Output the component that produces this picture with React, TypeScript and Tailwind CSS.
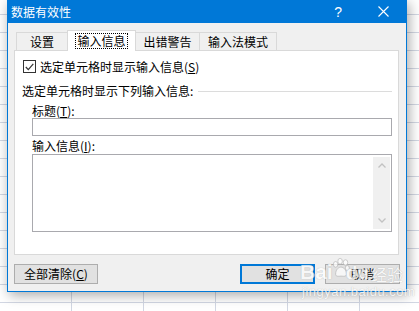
import React from 'react';

const TabItem: React.FC<{ label: string; className: string; active?: boolean }> = ({ label, className, active }) => {
  if (active) {
    return (
      <div className={`relative z-10 -mb-px -ml-px flex h-[21px] items-start justify-center border border-b-0 border-[#d9d9d9] bg-white pt-[2px] ${className}`}>
        <span className="border border-dotted border-black px-[1px] leading-[14px]">{label}</span>
      </div>
    );
  }
  return (
    <div className={`-ml-px flex h-[18px] items-center justify-center border border-b-0 border-[#d9d9d9] bg-[#f0f0f0] leading-[14px] ${className}`}>
      {label}
    </div>
  );
};

// faint baidu jingyan watermark over the lower right corner
const Watermark: React.FC = () => (
  <div className="pointer-events-none absolute left-[300px] top-[257px] flex flex-col text-white opacity-75 [text-shadow:0_0_1px_#9a9a9a]">
    <div className="flex items-end">
      <span className="font-['Liberation_Sans',sans-serif] text-[21px] font-bold leading-[26px]">Bai</span>
      <svg width="18" height="22" viewBox="0 0 20 22" className="-ml-[1px] mb-[6px]">
        <g fill="#ffffff" stroke="#a8a8a8" strokeWidth="0.8">
          <ellipse cx="4" cy="7" rx="2.5" ry="3.2" />
          <ellipse cx="9" cy="3.5" rx="2.5" ry="3.2" />
          <ellipse cx="15" cy="5" rx="2.5" ry="3.2" />
          <ellipse cx="17" cy="11" rx="2.3" ry="2.8" />
          <path d="M4 18 C4 12 8 10 10 10 C13 10 16 13 16 18 C16 21 12 20 10 20 C8 20 4 21 4 18 Z" />
        </g>
      </svg>
      <span className="-ml-[4px] font-['Liberation_Sans',sans-serif] text-[19px] font-bold leading-[24px]">du</span>
      <span className="ml-[2px] text-[16px] leading-[22px]">经验</span>
    </div>
    <span className="ml-[2px] font-['Liberation_Sans',sans-serif] text-[13px] leading-[14px] tracking-[0.5px]">jingyan.baidu.com</span>
  </div>
);

export default function App() {
  return (
    <div className="relative h-[311px] w-[419px] overflow-hidden bg-white bg-[linear-gradient(to_right,#d2d7e3_1px,transparent_1px),linear-gradient(to_bottom,#d2d7e3_1px,transparent_1px)] bg-[size:72px_18px] bg-[position:71px_14px] font-['Noto_Sans_CJK_SC',sans-serif] text-[12px] text-black">
      <div className="ml-[7px] flex h-[292px] w-[400px] flex-col border-x border-b border-[#0078d7] bg-[#f0f0f0] shadow-[2px_3px_12px_rgba(0,0,0,0.35)]">
        {/* title bar */}
        <div className="flex h-[23px] shrink-0 items-center bg-[#0078d7] pl-[3px] text-white">
          <span className="leading-[14px]">数据有效性</span>
          <span className="ml-auto font-['Liberation_Sans',sans-serif] text-[14px] leading-[14px]">?</span>
          <svg width="11" height="11" viewBox="0 0 11 11" className="ml-[36px] mr-[17px]">
            <path d="M0.5 0.5 L10.5 10.5 M10.5 0.5 L0.5 10.5" stroke="#ffffff" strokeWidth="1.1" />
          </svg>
        </div>

        {/* tabs */}
        <div className="ml-[9px] mt-[7px] flex h-[20px] shrink-0 items-end">
          <TabItem label="设置" className="w-[52px]" />
          <TabItem label="输入信息" className="w-[69px]" active />
          <TabItem label="出错警告" className="w-[65px]" />
          <TabItem label="输入法模式" className="w-[78px]" />
        </div>

        {/* panel */}
        <div className="ml-[6px] flex h-[205px] w-[385px] shrink-0 flex-col border border-[#d9d9d9] bg-white">
          <div className="ml-[8px] mt-[9px] flex h-[13px] items-center">
            <div className="flex h-[13px] w-[13px] items-center justify-center border border-[#333333] bg-white">
              <svg width="9" height="8" viewBox="0 0 9 8">
                <path d="M0.8 4 L3.3 6.6 L8.3 0.9" fill="none" stroke="#333333" strokeWidth="1.2" />
              </svg>
            </div>
            <span className="ml-[4px] leading-[14px]">
              选定单元格时显示输入信息(<u>S</u>)
            </span>
          </div>

          <div className="ml-[7px] mr-[6px] mt-[11px] flex h-[14px] items-center">
            <span className="leading-[14px]">选定单元格时显示下列输入信息:</span>
            <div className="ml-[5px] h-px flex-1 bg-[#dcdcdc]" />
          </div>

          <div className="ml-[17px] mt-[6px] h-[14px] leading-[14px]">
            标题(<u>T</u>):
          </div>
          <div className="ml-[17px] h-[18px] w-[360px] border border-[#a9a9ae] bg-white" />

          <div className="ml-[17px] mt-[3px] h-[14px] leading-[14px]">
            输入信息(<u>I</u>):
          </div>
          <div className="ml-[17px] mt-px flex h-[78px] w-[360px] justify-end border border-[#a9a9ae] bg-white">
            <div className="my-[2px] mr-px flex w-[17px] flex-col items-center justify-between bg-[#f0f0f0] py-[6px]">
              <svg width="8" height="5" viewBox="0 0 8 5">
                <path d="M0.5 4.5 L4 1 L7.5 4.5" fill="none" stroke="#c2c2c2" strokeWidth="1.3" />
              </svg>
              <svg width="8" height="5" viewBox="0 0 8 5">
                <path d="M0.5 0.5 L4 4 L7.5 0.5" fill="none" stroke="#c2c2c2" strokeWidth="1.3" />
              </svg>
            </div>
          </div>
        </div>

        {/* buttons */}
        <div className="mt-[9px] flex h-[20px] shrink-0 items-stretch">
          <button className="ml-[6px] flex w-[84px] items-center justify-center border border-[#adadad] bg-[#e1e1e1] leading-[14px]">
            全部清除(<u>C</u>)
          </button>
          <button className="ml-auto flex w-[75px] items-center justify-center border-2 border-[#0078d7] bg-[#e1e1e1] leading-[14px]">
            确定
          </button>
          <button className="ml-[10px] mr-[6px] flex w-[75px] items-center justify-center border border-[#adadad] bg-[#e1e1e1] leading-[14px]">
            取消
          </button>
        </div>
      </div>
      <Watermark />
    </div>
  );
}
